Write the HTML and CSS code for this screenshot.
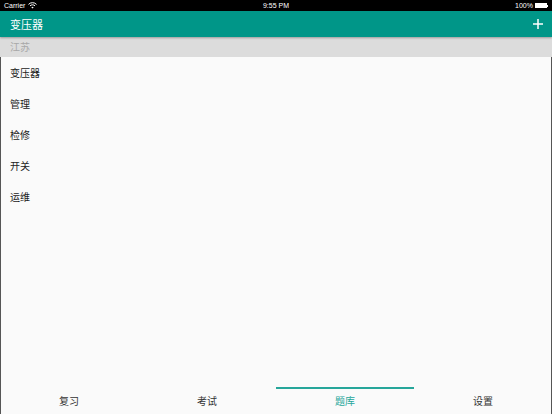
FILE: index.html
```html
<!DOCTYPE html>
<html lang="zh-CN">
<head>
  <meta charset="UTF-8">
  <meta name="viewport" content="width=device-width, initial-scale=1.0">
  <title>题库</title>
  <link rel="stylesheet" href="styles.css">
</head>
<body>
  <div class="app">
    <div class="status-bar">
      <span class="carrier">Carrier
        <svg class="wifi" width="9" height="7" viewBox="0 0 9 7">
          <path d="M0.5 2.4 A5.5 5.5 0 0 1 8.5 2.4" fill="none" stroke="#fff" stroke-width="1"/>
          <path d="M2 3.9 A3.4 3.4 0 0 1 7 3.9" fill="none" stroke="#fff" stroke-width="1"/>
          <path d="M4.5 6.6 L3.3 5.3 A1.7 1.7 0 0 1 5.7 5.3 Z" fill="#fff"/>
        </svg>
      </span>
      <span class="time">9:55 PM</span>
      <span class="battery">100%
        <span class="battery-body"></span><span class="battery-tip"></span>
      </span>
    </div>

    <div class="toolbar">
      <span class="title">变压器</span>
      <svg class="add" width="10" height="10" viewBox="0 0 10 10">
        <path d="M5 0 V10 M0 5 H10" stroke="#fff" stroke-width="1.5"/>
      </svg>
    </div>

    <div class="section-header">江苏</div>

    <div class="main">
      <ul class="list">
        <li>变压器</li>
        <li>管理</li>
        <li>检修</li>
        <li>开关</li>
        <li>运维</li>
      </ul>

      <nav class="tabs">
        <div class="tab">复习</div>
        <div class="tab">考试</div>
        <div class="tab active">题库</div>
        <div class="tab">设置</div>
      </nav>
    </div>
  </div>
</body>
</html>
```

FILE: styles.css
```css
html, body {
  margin: 0;
  padding: 0;
  height: 100%;
}
body {
  font-family: "Noto Sans CJK SC", "Liberation Sans", sans-serif;
  background-color: #fafafa;
  color: #222;
}
.app {
  display: flex;
  flex-direction: column;
  height: 100%;
}
.status-bar {
  height: 11px;
  background-color: #000;
  color: #fff;
  font-family: "Liberation Sans", sans-serif;
  font-size: 7px;
  display: flex;
  align-items: center;
  justify-content: space-between;
  padding: 0 4px;
}
.carrier {
  display: flex;
  align-items: center;
  gap: 3px;
  width: 80px;
}
.battery {
  display: flex;
  align-items: center;
  justify-content: flex-end;
  width: 80px;
}
.battery-body {
  width: 12px;
  height: 5px;
  background-color: #fff;
  margin-left: 2px;
}
.battery-tip {
  width: 1px;
  height: 2px;
  background-color: #fff;
}
.toolbar {
  height: 26px;
  background-color: #009688;
  color: #fff;
  display: flex;
  align-items: center;
  justify-content: space-between;
  padding: 0 9px 0 10px;
  font-size: 11px;
  position: relative;
  z-index: 1;
  box-shadow: 0 1px 2px rgba(0, 0, 0, 0.3);
}
.section-header {
  height: 20px;
  line-height: 20px;
  background-color: #dcdcdc;
  color: #a8a8a8;
  font-size: 10px;
  padding-left: 10px;
}
.main {
  flex: 1;
  display: flex;
  flex-direction: column;
  border-left: 1px solid #555;
  border-right: 1px solid #555;
}
.list {
  flex: 1;
  list-style: none;
  margin: 0;
  padding: 0;
}
.list li {
  height: 31px;
  line-height: 31px;
  padding-left: 9px;
  font-size: 10px;
}
.tabs {
  display: flex;
  height: 27px;
  margin: 0 -1px;
}
.tab {
  flex: 1;
  text-align: center;
  font-size: 10px;
  line-height: 24px;
  border-top: 2px solid transparent;
  color: #333;
}
.tab.active {
  color: #26a69a;
  border-top-color: #26a69a;
}
```
